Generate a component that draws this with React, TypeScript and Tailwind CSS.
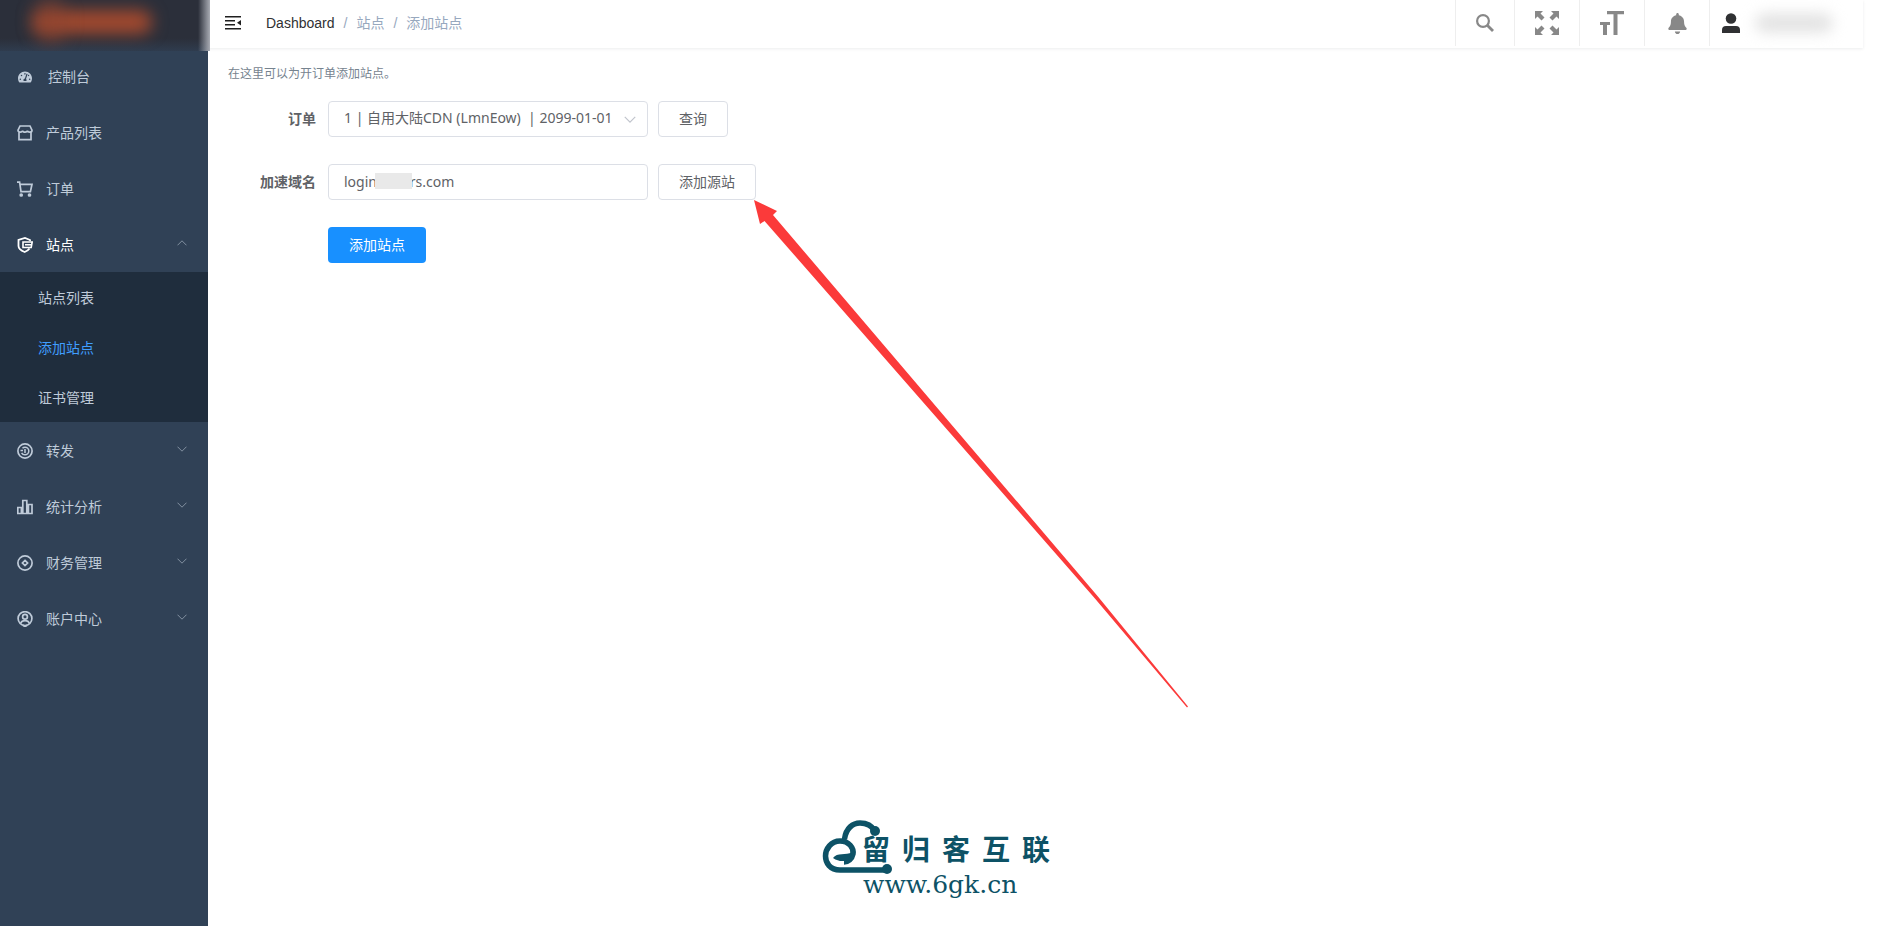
import React from "react";
import { FaTachometerAlt, FaBell } from "react-icons/fa";

const line = { fill: "none", stroke: "currentColor", strokeWidth: 1.7 } as const;

function Svg({ children }: { children: React.ReactNode }) {
  return (
    <svg viewBox="0 0 16 16" className="size-4 shrink-0" aria-hidden="true" {...line}>
      {children}
    </svg>
  );
}

const StoreIcon = () => (
  <Svg>
    <path d="M3 1h10l2 4.2c0 1.2-1 2-2.2 2S10.400 6.600 10.400 5.600C10.400 6.600 9.200 7.200 8 7.200S5.600 6.600 5.600 5.600C5.600 6.600 4.400 7.200 3.200 7.200S1 6.400 1 5.200zM2 7v7.700h12V7" />
  </Svg>
);
const CartIcon = () => (
  <Svg>
    <path d="M0 1.200h2.600L4 10.700h9.400L15 3.300H3.200" />
    <circle cx="4.200" cy="14" r="1" fill="currentColor" />
    <circle cx="12.500" cy="14" r="1" fill="currentColor" />
  </Svg>
);
const ShieldIcon = () => (
  <Svg>
    <path strokeWidth="1.800" d="M13 4V3L8 1 1.500 3v6c0 3 3 4.800 6.200 6 2.500-1 3.800-2 4.800-3.500" />
    <path strokeWidth="1.600" d="M15.200 5H6v5.500h8.200zM8 7.800H15" />
  </Svg>
);
const ForwardIcon = () => (
  <Svg>
    <circle cx="8" cy="8" r="7.100" />
    <path strokeWidth="1.500" d="M5.500 5.200C6.200 4.500 7 4.200 8 4.200a3.800 3.800 0 0 1 0 7.600c-1.600 0-2.800-.8-3.400-2M3.500 7.500H6M8 6v4" />
  </Svg>
);
const ChartIcon = () => (
  <Svg>
    <path d="M.8 8.500h3.600v6H.8zM5.800 1.500h4v13h-4zM11.400 5.500H15v9h-3.600z" />
  </Svg>
);
const CoinIcon = () => (
  <Svg>
    <circle cx="8" cy="8" r="7.100" />
    <path d="M8 5.400 10.600 8 8 10.600 5.400 8z" />
  </Svg>
);
const AccountIcon = () => (
  <Svg>
    <circle cx="8" cy="7.600" r="6.900" />
    <circle cx="8" cy="5.800" r="2.400" />
    <path d="M3.500 12.500C4.300 10.500 6 9.700 8 9.700s3.700.8 4.500 2.800M6 14.200l2 1.500 2-1.500" />
  </Svg>
);

function Chevron({ up = false, className = "h-1.5 w-2.5" }: { up?: boolean; className?: string }) {
  return (
    <svg viewBox="0 0 10 6" className={className} fill="none" stroke="currentColor" aria-hidden="true">
      <path d={up ? "M.5 5.300 5 .8l4.500 4.500" : "M.5.700 5 5.200 9.500.700"} />
    </svg>
  );
}

function MenuItem(props: { icon: React.ReactNode; label: string; active?: boolean; state?: "open" | "closed" }) {
  return (
    <a
      href="#"
      className={`flex h-14 items-center gap-[13px] pt-0.5 pr-[21px] pl-[17px] text-sm ${props.active ? "text-white" : "text-[#bfcbd9]"}`}
    >
      {props.icon}
      <span className="flex-1">{props.label}</span>
      {props.state && (
        <span className="pb-1 text-[#8290a1]">
          <Chevron up={props.state === "open"} />
        </span>
      )}
    </a>
  );
}

const subItems = ["站点列表", "添加站点", "证书管理"];
const outlined = "h-9 rounded border border-[#dcdfe6] bg-white text-sm text-[#606266]";

export default function App() {
  return (
    <div className="relative flex min-h-screen overflow-hidden bg-white font-['Noto_Sans','Noto_Sans_CJK_SC',sans-serif]">
      <aside className="w-52 shrink-0 bg-[#304156]">
        <div className="relative h-12">
          <div className="absolute top-0 left-0 h-[51px] w-[210px] overflow-hidden bg-linear-to-b from-[#2b2f3a] from-75% to-[#2f3c4e]">
            <div className="absolute top-2.5 left-8 h-6 w-[120px] rounded-full bg-[#a3492e] blur-[8px]" />
            <div className="absolute -top-1 left-9 h-12 w-7 rounded-full bg-[#8c432f]/50 blur-[9px]" />
            <div className="absolute top-0 right-0 h-full w-3 bg-linear-to-r from-transparent to-[#a9acb4]" />
          </div>
        </div>
        <nav>
          <MenuItem icon={<FaTachometerAlt className="mr-[3px] ml-px size-3.5" />} label="控制台" />
          <MenuItem icon={<StoreIcon />} label="产品列表" />
          <MenuItem icon={<CartIcon />} label="订单" />
          <MenuItem icon={<ShieldIcon />} label="站点" active state="open" />
          <div className="bg-[#1f2d3d]">
            {subItems.map((s) => (
              <a
                key={s}
                href="#"
                className={`flex h-[50px] items-center pt-0.5 pl-[38px] text-sm ${s === "添加站点" ? "text-[#409eff]" : "text-[#bfcbd9]"}`}
              >
                {s}
              </a>
            ))}
          </div>
          <MenuItem icon={<ForwardIcon />} label="转发" state="closed" />
          <MenuItem icon={<ChartIcon />} label="统计分析" state="closed" />
          <MenuItem icon={<CoinIcon />} label="财务管理" state="closed" />
          <MenuItem icon={<AccountIcon />} label="账户中心" state="closed" />
        </nav>
      </aside>

      <div className="min-w-0 flex-1">
        <header className="mr-[15px] flex h-12 items-center shadow-[0_1px_3px_rgba(0,21,41,0.08)]">
          <button aria-label="收起菜单" className="ml-[17px] pb-0.5">
            <svg viewBox="0 0 16 16" className="size-4" fill="#1f1f1f" aria-hidden="true">
              <path d="M0 1h16v1.500H0zM0 5h10v1.500H0zM0 9h10v1.500H0zM0 13h16v1.500H0zM16 5v5.500L12 7.750z" />
            </svg>
          </button>
          <nav className="ml-[25px] flex flex-1 items-center gap-[9px] pb-0.5 font-['Liberation_Sans','Noto_Sans_CJK_SC',sans-serif] text-sm text-[#97a8be]">
            <a href="#" className="text-[#303133]">Dashboard</a>
            <span>/</span>
            <span>站点</span>
            <span>/</span>
            <span>添加站点</span>
          </nav>
          <div className="flex h-full pb-0.5 text-[#888]">
            <button aria-label="搜索" className="flex w-[59px] items-center justify-center border-l border-[#eee]">
              <svg viewBox="0 0 18 18" className="size-[18px]" fill="none" stroke="currentColor" aria-hidden="true">
                <circle cx="7" cy="7" r="5.900" strokeWidth="2.200" />
                <path d="M11 11l6 6" strokeWidth="2.800" />
              </svg>
            </button>
            <button aria-label="全屏" className="flex w-[65px] items-center justify-center border-l border-[#eee]">
              <svg viewBox="0 0 24 24" className="size-6" fill="currentColor" aria-hidden="true">
                <path d="M0 0h8L5.500 2.500 9.500 6.500 6.500 9.500 2.500 5.500 0 8zM24 0v8l-2.500-2.500-4 4-3-3 4-4L16 0zM0 24v-8l2.500 2.500 4-4 3 3-4 4L8 24zM24 24h-8l2.500-2.500-4-4 3-3 4 4L24 16z" />
              </svg>
            </button>
            <button aria-label="字体大小" className="flex w-[65px] items-center justify-center border-l border-[#eee]">
              <svg viewBox="0 0 24 24" className="size-6" fill="currentColor" aria-hidden="true">
                <path d="M7 0h17v3.200h-6.500V24h-4V3.200H7zM0 11h10v3H7v10H3V14H0z" />
              </svg>
            </button>
            <button aria-label="通知" className="flex w-[65px] items-center justify-center border-l border-[#eee]">
              <FaBell className="size-[21px]" />
            </button>
            <button aria-label="用户" className="flex w-[154px] items-center gap-[12px] border-l border-[#eee] pl-[9px] text-[#303133]">
              <svg viewBox="0 0 24 24" className="size-6" fill="#303133" aria-hidden="true">
                <circle cx="12" cy="7.500" r="5.300" />
                <path d="M3 22v-3q0-4 4-4h10q4 0 4 4v3z" />
              </svg>
              <span className="h-5 w-[78px] rounded-full bg-[#e4e4e4] blur-[7px]" />
            </button>
          </div>
        </header>

        <main className="px-5 pt-4">
          <p className="text-xs leading-5 text-[#76838f]">在这里可以为开订单添加站点。</p>
          <form className="mt-[17px] flex flex-col gap-[27px]" onSubmit={(e) => e.preventDefault()}>
            <div className="flex items-center">
              <label htmlFor="order" className="w-[100px] pr-3 text-right text-sm font-bold text-[#606266]">订单</label>
              <div className="relative w-80">
                <select id="order" className={`${outlined} w-full appearance-none pr-8 pb-0.5 pl-[15px]`}>
                  <option>{"1 | 自用大陆CDN (LmnEow) \u00a0| 2099-01-01"}</option>
                </select>
                <span className="pointer-events-none absolute inset-y-0 right-3 flex items-center text-[#c0c4cc]">
                  <Chevron className="h-[7px] w-3" />
                </span>
              </div>
              <button className={`${outlined} ml-2.5 px-5 pb-px`}>查询</button>
            </div>
            <div className="flex items-center">
              <label htmlFor="domain" className="w-[100px] pr-3 text-right text-sm font-bold text-[#606266]">加速域名</label>
              <div className="relative w-80">
                <input
                  id="domain"
                  className={`${outlined} w-full px-[15px] pb-0.5`}
                  defaultValue={"login" + "\u00a0".repeat(9) + "rs.com"}
                />
                <span className="absolute top-[9px] left-[47px] h-4 w-[37px] bg-[#e9e9e9]" />
              </div>
              <button className={`${outlined} ml-2.5 px-5 pb-px`}>添加源站</button>
            </div>
            <div className="pl-[100px]">
              <button className="h-9 rounded bg-[#1890ff] px-[21px] pb-px text-sm text-white">添加站点</button>
            </div>
          </form>
        </main>
      </div>

      <svg
        viewBox="0 0 434 508"
        className="pointer-events-none absolute top-[200px] left-[754px] h-[508px] w-[434px]"
        fill="#fb3a3a"
        aria-hidden="true"
      >
        <path d="M0 0 23 11 19 15 343.500 396 434 506.500 433 507.500 340.500 398 10.500 21 6 24z" />
      </svg>

      <div className="pointer-events-none absolute bottom-[25px] left-[822px] text-[#0d5266]">
        <svg viewBox="0 0 72 56" className="absolute top-0 left-0 h-14 w-[72px]" fill="none" stroke="currentColor" strokeWidth="5.500" aria-hidden="true">
          <path d="M22.500 19C24 8 31 3 38 3c7 0 12 3 15 8M65 50H18C8 50 3.500 43 3.500 36S9 21 18 21s14 7 13 13c-1 5-5 8-9 8" />
          <circle cx="53" cy="11" r="5" fill="currentColor" stroke="none" />
          <circle cx="65" cy="49" r="5" fill="currentColor" stroke="none" />
          <path d="M11 38C15 32 24 36 30 32 29 41 20 44 11 38z" fill="currentColor" stroke="none" />
        </svg>
        <div className="flex gap-3 pt-2.5 pb-[3px] pl-10 font-['Noto_Sans_CJK_SC',sans-serif] text-[28px] leading-9 font-bold">
          {Array.from("留归客互联").map((c) => (
            <span key={c}>{c}</span>
          ))}
        </div>
        <div className="pl-[41px] font-['DejaVu_Serif',serif] text-[25px] leading-8">www.6gk.cn</div>
      </div>
    </div>
  );
}
